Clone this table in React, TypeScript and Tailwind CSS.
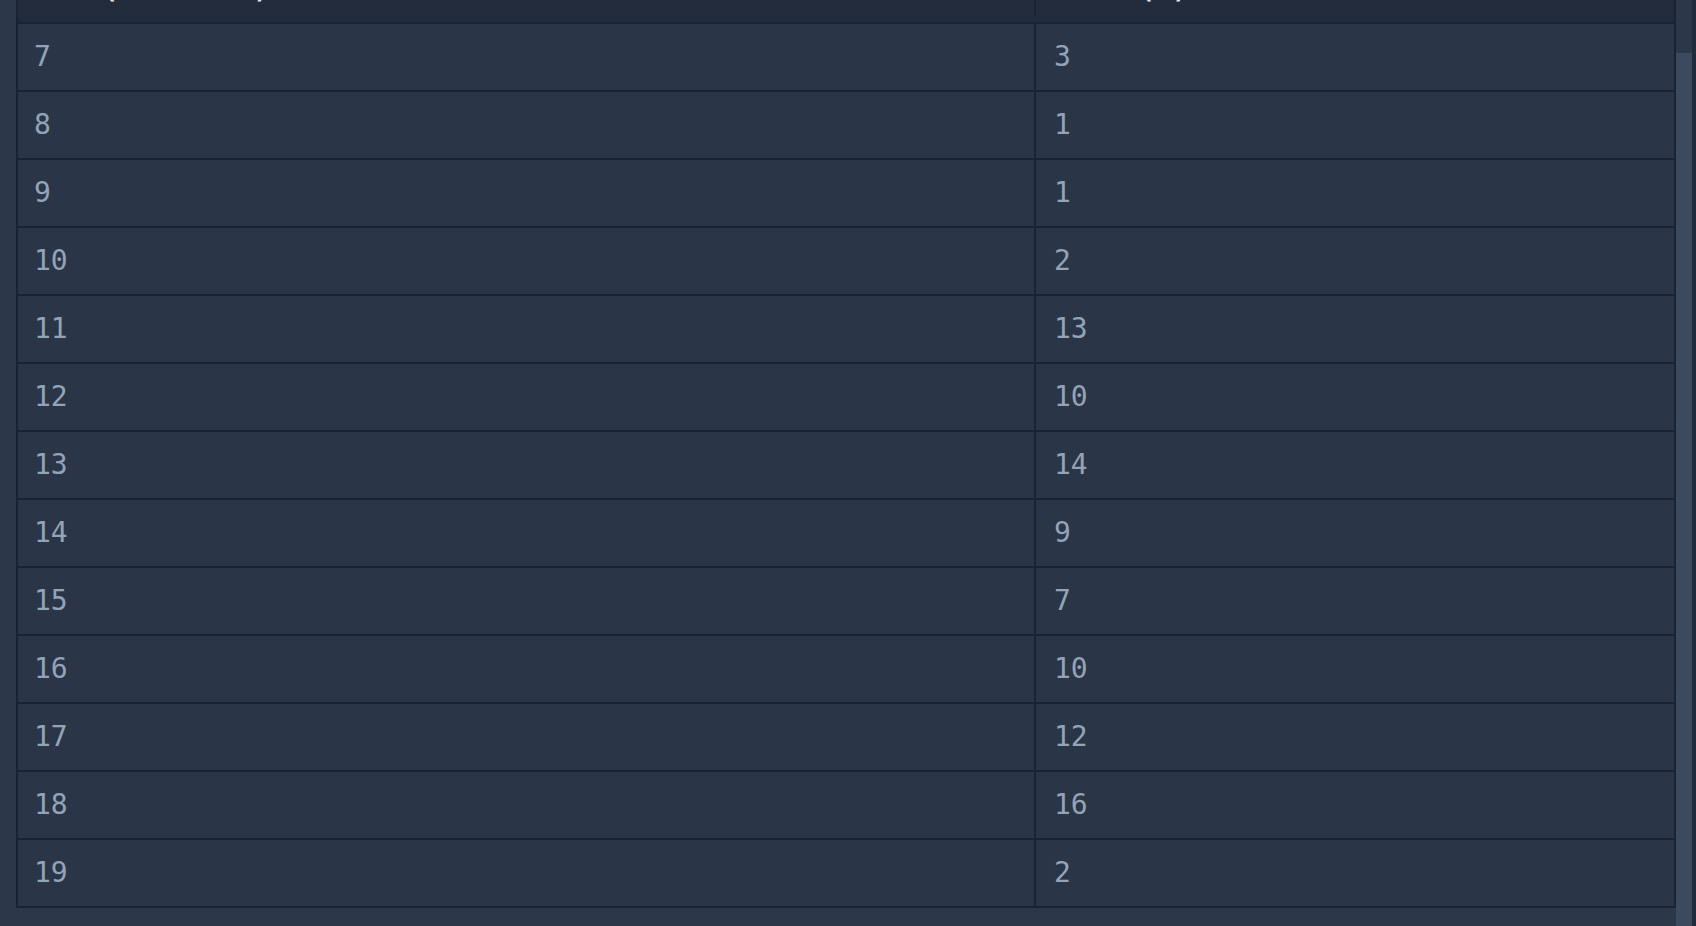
import React from "react";

const ROWS: [number, number][] = [
  [7, 3],
  [8, 1],
  [9, 1],
  [10, 2],
  [11, 13],
  [12, 10],
  [13, 14],
  [14, 9],
  [15, 7],
  [16, 10],
  [17, 12],
  [18, 16],
  [19, 2],
];

export default function App() {
  return (
    <div className="flex h-[926px] w-full overflow-hidden bg-[#222b3c] font-['DejaVu_Sans_Mono',monospace]">
      {/* Scrolled view: the header row sits mostly above the fold */}
      <div className="h-full w-[1676px] overflow-hidden bg-[#2c3849] pl-4">
        <div className="mt-[-40px] border-2 border-[#1a2233] bg-[#2a3647]">
          {/* Header */}
          <div className="grid h-[60px] grid-cols-[1018px_1fr] bg-[#222b3c] pb-[6px] text-[28px] font-semibold text-slate-200">
            <div className="flex items-center border-r-2 border-[#1a2233] pl-4">Bin (interval)</div>
            <div className="flex items-center pl-[18px]">Size (n)</div>
          </div>

          {ROWS.map(([bin, count]) => (
            <div
              key={bin}
              className="grid h-[68px] grid-cols-[1018px_1fr] border-t-2 border-[#1a2233] text-[28px] text-[#94a3b8]"
            >
              <div className="flex items-center border-r-2 border-[#1a2233] pl-4">{bin}</div>
              <div className="flex items-center pl-[18px]">{count}</div>
            </div>
          ))}
        </div>
      </div>

      {/* Scrollbar */}
      <div className="flex h-full w-4 flex-col bg-[#2c3849]">
        <div className="mt-[53px] flex-1 bg-[#3b4a5f]" />
      </div>
    </div>
  );
}
